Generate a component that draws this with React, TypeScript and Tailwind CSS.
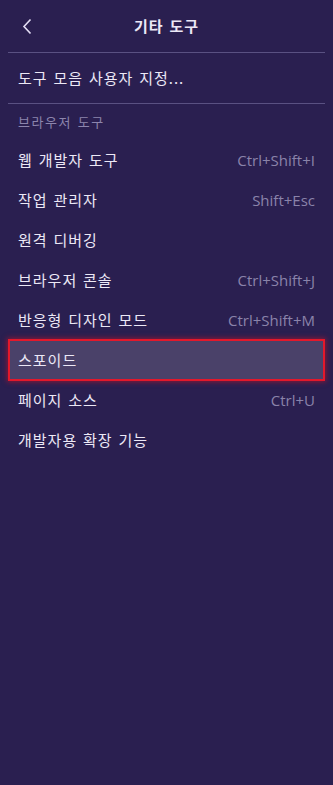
const FONT = { fontFamily: '"Noto Sans CJK KR", "Noto Sans", sans-serif', wordSpacing: '1.5px' }
const SC = { fontFamily: '"Open Sans", "Noto Sans", sans-serif', wordSpacing: 0 }

const items: { label: string; shortcut?: string; active?: boolean }[] = [
  { label: '웹 개발자 도구', shortcut: 'Ctrl+Shift+I' },
  { label: '작업 관리자', shortcut: 'Shift+Esc' },
  { label: '원격 디버깅' },
  { label: '브라우저 콘솔', shortcut: 'Ctrl+Shift+J' },
  { label: '반응형 디자인 모드', shortcut: 'Ctrl+Shift+M' },
  { label: '스포이드', active: true },
  { label: '페이지 소스', shortcut: 'Ctrl+U' },
  { label: '개발자용 확장 기능' },
]

export default function App() {
  return (
    <div className="w-[333px] h-[785px] bg-[#2a1f50] text-[#ece8f6]" style={FONT}>
      {/* Header */}
      <div className="relative h-[53px] flex items-center justify-center mx-[8px] border-b border-[#5a5182]">
        <button className="absolute left-[12px] top-[17px] w-[14px] h-[18px] flex items-center justify-center">
          <svg width="10" height="17" viewBox="0 0 10 17" fill="none">
            <path d="M8.5 1.5L2 8.5l6.5 7" stroke="#e4def4" strokeWidth="1.6" />
          </svg>
        </button>
        <h1 className="text-[15px] font-bold tracking-[1px]">기타 도구</h1>
      </div>

      <div className="mx-[8px] h-[51px] flex items-center px-[10px] border-b border-[#5a5182] text-[15px] tracking-[1px]">
        도구 모음 사용자 지정...
      </div>

      <div className="h-[36px] flex items-center px-[18px] text-[13px] tracking-[1.5px] text-[#8c85ad]">브라우저 도구</div>

      <ul>
        {items.map(item => (
          <li
            key={item.label}
            className={
              item.active
                ? 'mx-[8px] h-[42px] -my-[1px] flex items-center justify-between px-[8px] border-2 border-[#e3182b] bg-[#4a4169] shadow-[0_0_5px_1px_rgba(200,20,40,0.6)] text-[15px]'
                : 'h-[40px] flex items-center justify-between px-[18px] text-[15px]'
            }
          >
            <span className="tracking-[1px]">{item.label}</span>
            {item.shortcut && (
              <span className="text-[15px] text-[#8a83aa]" style={SC}>
                {item.shortcut}
              </span>
            )}
          </li>
        ))}
      </ul>
    </div>
  )
}
